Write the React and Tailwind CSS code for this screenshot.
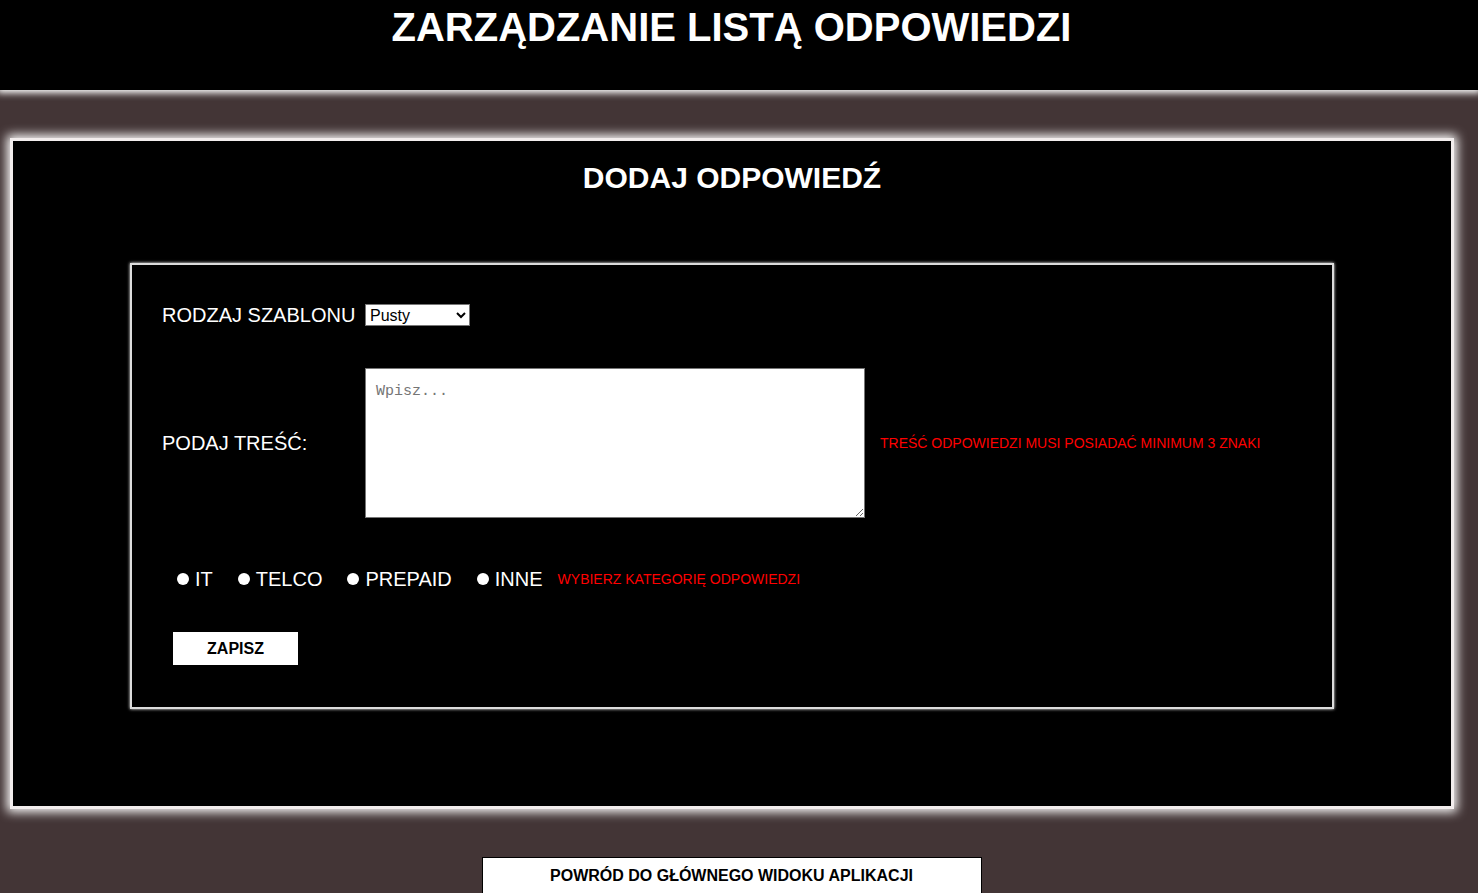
import React, { useState } from 'react';

const kategorie = ['IT', 'TELCO', 'PREPAID', 'INNE'];

const App = () => {
  const [szablon, setSzablon] = useState('Pusty');
  const [tresc, setTresc] = useState('');
  const [kategoria, setKategoria] = useState('');

  return (
    <div className="min-h-screen bg-[#433536] font-['Liberation_Sans',Arial,sans-serif] text-white">
      {/* Naglowek */}
      <header className="h-[90px] bg-black pr-[15px] shadow-[0_0_7px_3px_#fff]">
        <h1 className="text-center text-[40px] leading-[54px] font-bold">ZARZĄDZANIE LISTĄ ODPOWIEDZI</h1>
      </header>

      <div className="w-[1463px]">
        {/* Panel */}
        <section className="ml-[10px] mr-[9px] mt-[48px] border-[3px] border-[#f2eded] bg-black pt-[18px] pb-[97px] shadow-[0_0_10px_3px_#fff]">
          <h2 className="text-center text-[30px] leading-[38px] font-bold">DODAJ ODPOWIEDŹ</h2>

          <form className="mx-auto mt-[66px] w-[1204px] border-2 border-[#dcdcdc] px-[30px] pt-[35px] pb-[42px] shadow-[0_0_3px_#fff]">
            <div className="flex items-center">
              <label className="w-[203px] text-[20px]">RODZAJ SZABLONU</label>
              <select
                value={szablon}
                onChange={e => setSzablon(e.target.value)}
                className="h-[22px] w-[105px] border border-[#767676] bg-white text-[16px] text-black"
              >
                <option>Pusty</option>
                <option>Powitanie</option>
                <option>Pożegnanie</option>
              </select>
            </div>

            <div className="mt-[38px] flex items-center">
              <label className="w-[203px] text-[20px]">PODAJ TREŚĆ:</label>
              <textarea
                value={tresc}
                onChange={e => setTresc(e.target.value)}
                placeholder="Wpisz..."
                className="h-[150px] w-[500px] border border-[#767676] bg-white px-[10px] pt-[12px] pb-[10px] font-['Liberation_Mono',monospace] text-[15px] text-black placeholder:text-[#757575]"
              />
              <span className="ml-[15px] text-[14px] text-[#ff0000]">TREŚĆ ODPOWIEDZI MUSI POSIADAĆ MINIMUM 3 ZNAKI</span>
            </div>

            <div className="mt-[46px] flex items-center pl-[15px]">
              {kategorie.map(k => (
                <label key={k} className="mr-[25px] flex items-center text-[20px]">
                  <input
                    type="radio"
                    name="kategoria"
                    checked={kategoria === k}
                    onChange={() => setKategoria(k)}
                    className="mr-[6px] h-[12px] w-[12px] appearance-none rounded-full bg-white checked:border-[3px] checked:border-white checked:bg-[#0075ff]"
                  />
                  {k}
                </label>
              ))}
              <span className="-ml-[10px] text-[14px] text-[#ff0000]">WYBIERZ KATEGORIĘ ODPOWIEDZI</span>
            </div>

            <button
              type="button"
              className="mt-[38px] ml-[11px] h-[33px] w-[125px] bg-white text-[16px] font-bold text-black"
            >
              ZAPISZ
            </button>
          </form>
        </section>

        {/* Powrot */}
        <div className="flex justify-center pt-[48px] pb-[20px]">
          <button type="button" className="h-[37px] w-[500px] border border-black bg-white text-[16px] font-bold text-black">
            POWRÓD DO GŁÓWNEGO WIDOKU APLIKACJI
          </button>
        </div>
      </div>
    </div>
  );
};

export default App;
